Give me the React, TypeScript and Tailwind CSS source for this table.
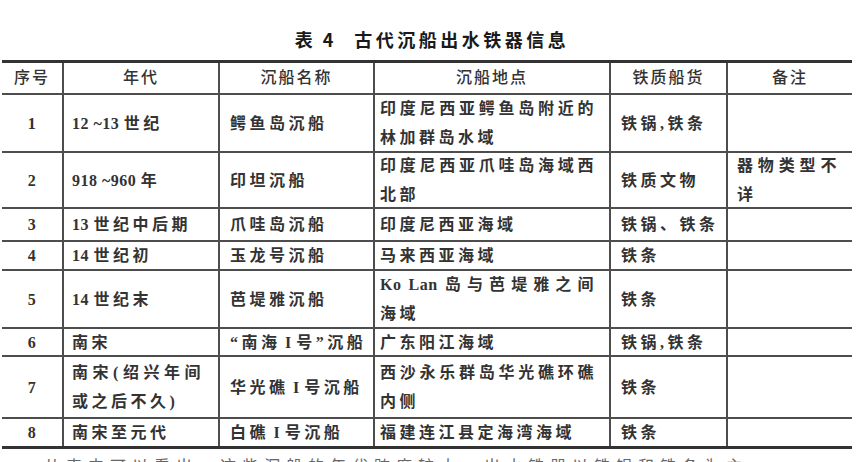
const serif = "font-['Liberation_Serif','Noto_Sans_CJK_SC',serif]";

type Row = {
  h: string;
  cells: string[][];
};

// column paddings, measured off the scan
const cols = [
  "w-[60px] justify-center",
  "w-[156px] border-l-2 pl-[8px] pr-[14px]",
  "w-[155px] border-l-2 pl-[10px] pr-[8px]",
  "w-[236px] border-l-2 pl-[5px] pr-[12px]",
  "w-[117px] border-l-2 pl-[10px] pr-[4px]",
  "w-[126px] border-l-2 pl-[9px] pr-[12px]",
];

const rows: Row[] = [
  {
    h: "h-[58px]",
    cells: [["1"], ["12 ~13 世纪"], ["鳄鱼岛沉船"], ["印度尼西亚鳄鱼岛附近的", "林加群岛水域"], ["铁锅,铁条"], []],
  },
  {
    h: "h-[56px]",
    cells: [["2"], ["918 ~960 年"], ["印坦沉船"], ["印度尼西亚爪哇岛海域西", "北部"], ["铁质文物"], ["器物类型不", "详"]],
  },
  {
    h: "h-[33px]",
    cells: [["3"], ["13 世纪中后期"], ["爪哇岛沉船"], ["印度尼西亚海域"], ["铁锅、铁条"], []],
  },
  {
    h: "h-[29px]",
    cells: [["4"], ["14 世纪初"], ["玉龙号沉船"], ["马来西亚海域"], ["铁条"], []],
  },
  {
    h: "h-[58px]",
    cells: [["5"], ["14 世纪末"], ["芭堤雅沉船"], ["Ko Lan 岛与芭堤雅之间", "海域"], ["铁条"], []],
  },
  {
    h: "h-[28px]",
    cells: [["6"], ["南宋"], ["“南海 I 号”沉船"], ["广东阳江海域"], ["铁锅,铁条"], []],
  },
  {
    h: "h-[62px]",
    cells: [["7"], ["南宋(绍兴年间", "或之后不久)"], ["华光礁 I 号沉船"], ["西沙永乐群岛华光礁环礁", "内侧"], ["铁条"], []],
  },
  {
    h: "h-[27px]",
    cells: [["8"], ["南宋至元代"], ["白礁 I 号沉船"], ["福建连江县定海湾海域"], ["铁条"], []],
  },
];

// latin runs keep normal spacing, CJK gets the wide scan spacing
function Runs({ text }: { text: string }) {
  const parts = text.split(/([A-Za-z0-9~ ]+)/).filter(Boolean);
  return (
    <>
      {parts.map((p, i) =>
        /^[A-Za-z0-9~ ]+$/.test(p) ? (
          <span key={i} className="tracking-[0.5px]">
            {p}
          </span>
        ) : (
          <span key={i}>{p}</span>
        )
      )}
    </>
  );
}

function Cell({ lines, col }: { lines: string[]; col: number }) {
  return (
    <div className={`flex h-full flex-col justify-center border-[#4d4d4d] ${cols[col]}`}>
      {lines.map((l, i) =>
        i < lines.length - 1 ? (
          <div key={i} className="text-justify leading-[29px] [text-align-last:justify]">
            <Runs text={l} />
          </div>
        ) : (
          <div key={i} className={`whitespace-nowrap leading-[29px] ${col === 0 ? "text-center" : ""}`}>
            <Runs text={l} />
          </div>
        )
      )}
    </div>
  );
}

export default function App() {
  const head = ["序号", "年代", "沉船名称", "沉船地点", "铁质船货", "备注"];

  return (
    <div className="h-[462px] w-[864px] overflow-hidden bg-white text-[#333]">
      <div className="mt-[27px] flex h-[24px] justify-center font-['Noto_Sans_CJK_SC',sans-serif] text-[18px] font-bold leading-[24px] text-[#1a1a1a]">
        <span className="tracking-[3px]">表 4</span>
        <span className="ml-[18px] tracking-[3.5px]">古代沉船出水铁器信息</span>
      </div>

      <div
        className={`ml-[2px] mt-[9px] w-[850px] border-y-[3px] border-[#333] text-[16px] font-bold tracking-[3.5px] ${serif}`}
      >
        <div className="flex h-[32px] border-b-2 border-[#4d4d4d] font-medium">
          {head.map((t, i) => (
            <div
              key={t}
              className={`flex h-full items-center justify-center border-[#4d4d4d] tracking-[2px] ${cols[i].replace(/p[lr]-\[\d+px\]/g, "")}`}
            >
              {t}
            </div>
          ))}
        </div>

        {rows.map((r, ri) => (
          <div
            key={ri}
            className={`flex ${r.h} ${ri < rows.length - 1 ? "border-b-2 border-[#4d4d4d]" : ""}`}
          >
            {r.cells.map((c, ci) => (
              <Cell key={ci} lines={c} col={ci} />
            ))}
          </div>
        ))}
      </div>

      <p className={`mt-[6px] pl-[44px] text-[16px] tracking-[6px] text-[#666] ${serif}`}>
        从表中可以看出，这些沉船的年代跨度较大，出水铁器以铁锅和铁条为主，
      </p>
    </div>
  );
}
